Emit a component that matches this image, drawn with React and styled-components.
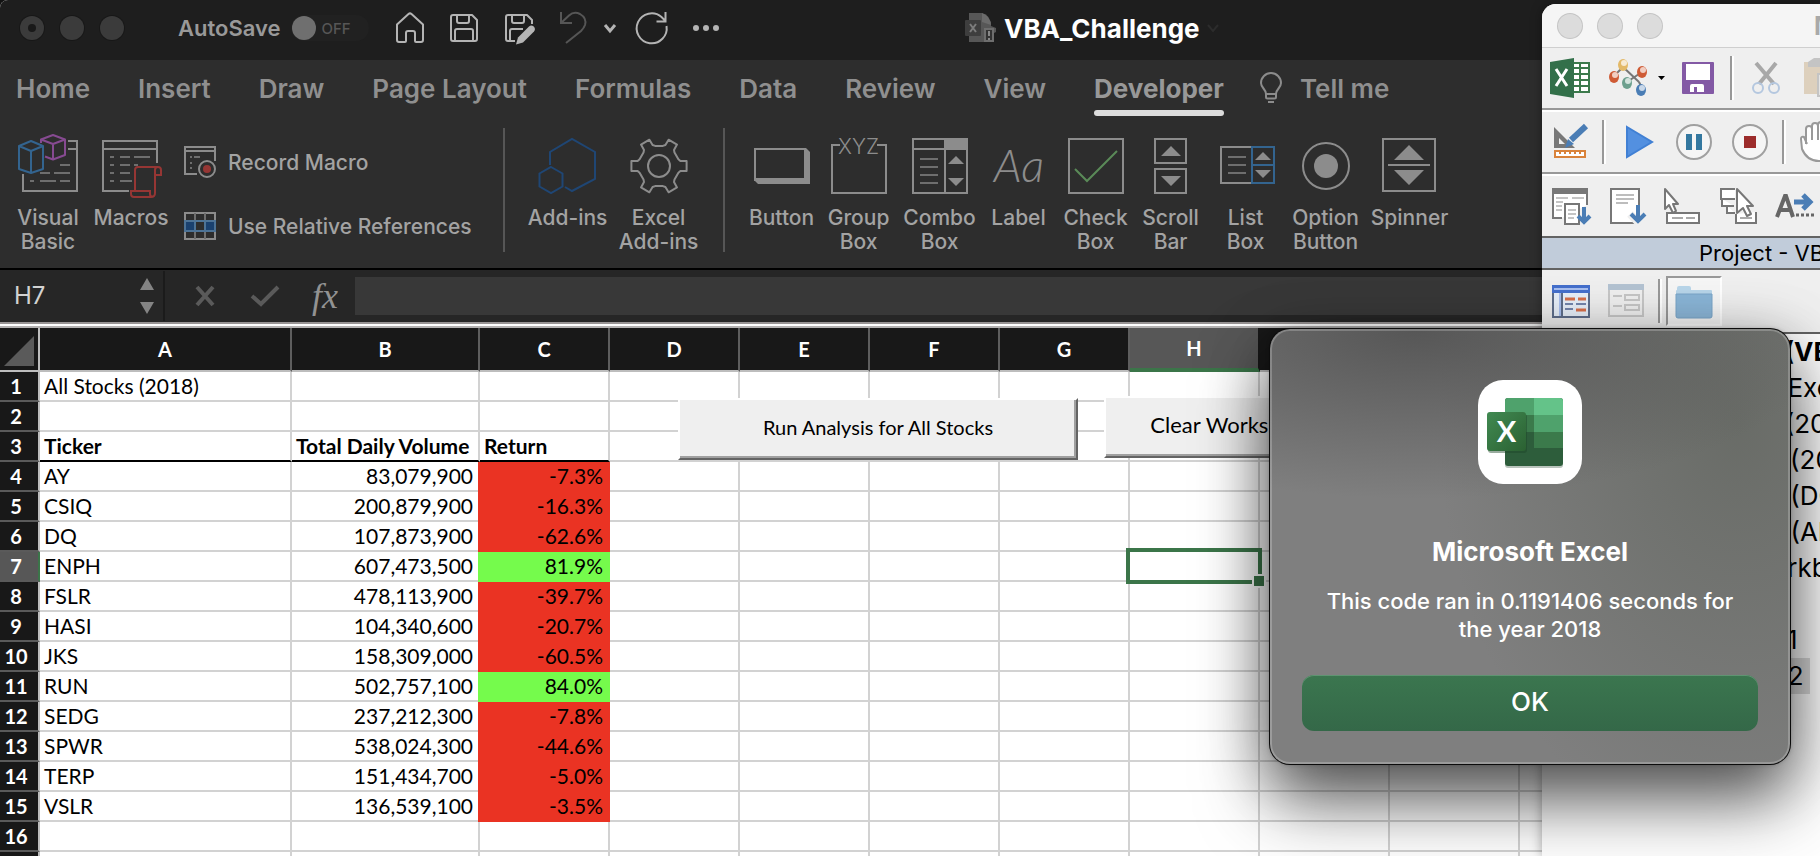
import React from "react";
import styled, { createGlobalStyle, css } from "styled-components";

const ui = `Inter, "Liberation Sans", sans-serif`;
const sheetFont = `Lato, "Liberation Sans", sans-serif`;

const GlobalStyle = createGlobalStyle`
  *, *::before, *::after { box-sizing: border-box; }
  html, body { margin: 0; height: 100%; overflow: hidden; background: #121212; }
  #root { height: 100%; }
  button, input { font: inherit; color: inherit; margin: 0; padding: 0; border: 0; background: none; border-radius: 0; outline: none; }
  svg { display: block; overflow: visible; flex: none; }
`;

/* ---------- desktop and Excel window ---------- */

const Desktop = styled.div`
  position: relative;
  height: 100vh;
  overflow: hidden;
  font-family: ${ui};
`;

const ExcelWindow = styled.main`
  display: flex;
  flex-direction: column;
  height: 100%;
  background: #fff;
  border-top-left-radius: 8px;
  overflow: hidden;
`;

const TitleBar = styled.header`
  display: flex;
  align-items: center;
  flex: none;
  height: 60px;
  padding: 0 0 4px 20px;
  background: #1e1e1e;
  color: #a0a0a0;
`;

const Lights = styled.div`
  display: flex;
  gap: 16px;
`;

const Light = styled.button`
  display: grid;
  place-items: center;
  width: 24px;
  height: 24px;
  border-radius: 50%;
  background: ${(p) => (p.$pale ? "#dcdcdc" : "#3b3b3b")};
  box-shadow: 0 0 0 1px ${(p) => (p.$pale ? "#c4c4c4" : "#181818")};
  &::after {
    content: "";
    width: 8px;
    height: 8px;
    border-radius: 50%;
    background: ${(p) => (p.$dirty ? "#191919" : "transparent")};
  }
`;

const Bar = styled.div`
  display: flex;
  align-items: center;
  flex: none;
  height: 56px;
`;

const AutoSave = styled.label`
  display: flex;
  align-items: center;
  gap: 10px;
  width: 205px;
  margin-left: 54px;
  font-size: 22px;
  font-weight: 600;
  color: #999;
`;

const Switch = styled.span`
  display: flex;
  align-items: center;
  gap: 6px;
  width: 78px;
  height: 26px;
  padding-left: 1px;
  border-radius: 13px;
  background: #212121;
  font-size: 15px;
  font-weight: 500;
  color: #565656;
  input { position: absolute; opacity: 0; width: 24px; height: 24px; }
  i { width: 24px; height: 24px; border-radius: 50%; background: #6f6f6f; flex: none; }
`;

const QuickButton = styled.button`
  display: grid;
  place-items: center;
  flex: none;
  width: ${(p) => p.$w || 54}px;
  height: 40px;
`;

const DocTitle = styled.div`
  display: flex;
  align-items: center;
  gap: 7px;
  margin-left: 236px;
  color: #fff;
  font-size: 26px;
  font-weight: 700;
  white-space: nowrap;
`;

const Tabs = styled.nav`
  display: flex;
  align-items: flex-start;
  flex: none;
  gap: 48px;
  height: 58px;
  padding: 12px 0 0 16px;
  background: #2d2d2d;
`;

const Tab = styled.button`
  flex: none;
  display: flex;
  align-items: center;
  gap: 18px;
  height: 44px;
  padding-bottom: 6px;
  font-size: 26px;
  font-weight: ${(p) => (p.$on ? 700 : 600)};
  color: ${(p) => (p.$on ? "#989898" : "#8f8f8f")};
  border-bottom: 6px solid transparent;
  white-space: nowrap;
  margin-right: ${(p) => (p.$on ? "-12px" : "0")};
  ${(p) => p.$on && css`
    position: relative;
    &::after {
      content: "";
      position: absolute;
      left: 0;
      right: 0;
      bottom: -6px;
      height: 6px;
      border-radius: 3px;
      background: #dcdcdc;
    }
  `}
`;

const Ribbon = styled.section`
  display: flex;
  flex: none;
  align-items: flex-start;
  height: 152px;
  padding: 10px 0 0 10px;
  background: #2d2d2d;
  border-bottom: 2px solid #000;
  color: #a3a3a3;
  font-size: 21px;
  font-weight: 500;
`;

const ToolGroup = styled.div`
  display: flex;
  padding: 6px 18px 0 ${(p) => (p.$first ? 0 : 18)}px;
`;

const Divider = styled.div`
  flex: none;
  width: 2px;
  height: 124px;
  background: #565656;
`;

const Tool = styled.button`
  display: flex;
  flex-direction: column;
  align-items: center;
  gap: 12px;
  flex: none;
  width: ${(p) => p.$w}px;
  line-height: 24px;
  white-space: pre;
  text-align: center;
`;

const SmallTools = styled.div`
  display: flex;
  flex-direction: column;
  gap: 32px;
  padding: 12px 13px 0 8px;
`;

const SmallTool = styled.button`
  display: flex;
  align-items: center;
  gap: 12px;
  height: 32px;
  white-space: nowrap;
`;

const FormulaBar = styled.section`
  display: flex;
  align-items: center;
  flex: none;
  height: 52px;
  background: #262626;
`;

const NameBox = styled.div`
  display: flex;
  align-items: center;
  justify-content: space-between;
  width: 165px;
  height: 50px;
  padding: 0 9px 0 14px;
  border-right: 2px solid #1b1b1b;
  input { width: 100px; height: 42px; padding-bottom: 2px; font-size: 24px; color: #d2d2d2; }
`;

const FormulaButton = styled.button`
  width: 60px;
  height: 40px;
  display: grid;
  place-items: center;
  color: #929292;
  font: italic 36px/36px "Liberation Serif", serif;
`;

const FormulaActions = styled.div`
  display: flex;
  padding-left: 10px;
  flex: none;
`;

const FormulaInput = styled.input`
  flex: 1;
  min-width: 0;
  height: 38px;
  padding: 0 12px;
  background: #383838;
  color: #ddd;
  font-size: 22px;
`;

const Splitter = styled.div`
  flex: none;
  height: 6px;
  background: #fff;
  border-top: 2px solid #989494;
  border-bottom: 2px solid #b4b2b2;
`;

/* ---------- worksheet ---------- */

const SheetArea = styled.section`
  position: relative;
  flex: 1;
  min-height: 0;
  overflow: hidden;
  font-family: ${sheetFont};
  color: #000;
`;

const Grid = styled.table`
  table-layout: fixed;
  width: 100%;
  border-collapse: separate;
  border-spacing: 0;
  font-size: 21px;
  line-height: 28px;
  th, td { padding: 0; height: 30px; white-space: nowrap; }
`;

const ColHead = styled.th`
  && { height: 44px; }
  background: ${(p) => (p.$on ? "#575757" : "#181818")};
  border-right: 2px solid ${(p) => (p.$on ? "#181818" : "#5e5e5e")};
  border-bottom: ${(p) => (p.$on ? "4px solid #3b7549" : "2px solid #bdbdbd")};
  color: #fff;
  font-size: 20px;
  font-weight: 700;
`;

const Corner = styled.th`
  && { height: 44px; padding: 4px 0 0 4px; }
  background: #181818;
  border-right: 2px solid #bdbdbd;
  border-bottom: 2px solid #bdbdbd;
`;

const RowHead = styled.th`
  && { padding-right: 6px; }
  background: ${(p) => (p.$on ? "#575757" : "#181818")};
  border-right: 2px solid ${(p) => (p.$on ? "#3b7549" : "#bdbdbd")};
  border-bottom: 2px solid #5a5a5a;
  color: #fff;
  font-size: 20px;
  font-weight: 700;
`;

const fills = { red: "#ea3323", green: "#75fb4c" };

const Cell = styled.td`
  && { padding: 0 5px 0 4px; }
  border-right: 2px solid #d2d2d2;
  border-bottom: 2px solid #d2d2d2;
  text-align: ${(p) => (p.$num ? "right" : "left")};
  font-weight: ${(p) => (p.$bold ? 700 : 400)};
  ${(p) => p.$active && css`position: relative;`}
  ${(p) => p.$bold && css`border-bottom-color: #000;`}
  ${(p) => p.$fill && css`
    background: ${fills[p.$fill]};
    border-color: ${fills[p.$fill]};
    box-shadow: -2px 0 0 ${fills[p.$fill]};
  `}
`;

const Selection = styled.div`
  position: absolute;
  inset: -4px;
  border: 4px solid #3b7549;
  &::after {
    content: "";
    position: absolute;
    right: -8px;
    bottom: -8px;
    width: 14px;
    height: 14px;
    background: #3b7549;
    border: 2px solid #fff;
  }
`;

const SheetButton = styled.button`
  position: absolute;
  left: ${(p) => p.$x}px;
  top: ${(p) => p.$y}px;
  width: ${(p) => p.$w}px;
  height: 62px;
  background: #efefef;
  border: 2px solid;
  border-color: #fff #646464 #646464 #fff;
  box-shadow: inset -2px -2px 0 #a0a0a0;
  font-size: ${(p) => p.$size}px;
  line-height: 28px;
  padding-bottom: 4px;
`;

/* ---------- Visual Basic window ---------- */

const VbaWindow = styled.aside`
  position: absolute;
  left: 1542px;
  right: 0;
  top: 4px;
  bottom: 0;
  display: flex;
  flex-direction: column;
  overflow: hidden;
  background: #fff;
  border-top-left-radius: 14px;
  color: #000;
`;

const VbaShadow = styled.div`
  position: absolute;
  left: 1542px;
  right: 0;
  top: 4px;
  bottom: 0;
  border-top-left-radius: 14px;
  box-shadow: 0 0 12px rgba(0, 0, 0, 0.35);
`;

const VbaTitle = styled.header`
  display: flex;
  align-items: center;
  flex: none;
  height: 44px;
  padding-left: 16px;
  background: #f5f5f5;
  border-bottom: 1px solid #cfcfcf;
  h2 { margin: 0 0 0 152px; font-size: 25px; font-weight: 700; color: #a9a9a9; white-space: nowrap; }
`;

const VbaToolbar = styled.div`
  display: flex;
  align-items: center;
  flex: none;
  height: ${(p) => (p.$last ? 62 : 64)}px;
  background: #efefef;
  border-bottom: ${(p) => (p.$dark ? "2px solid #636363" : "2px solid #fff")};
  box-shadow: ${(p) => (p.$dark ? "none" : "inset 0 -2px 0 #989898")};
  padding-bottom: ${(p) => (p.$dark ? 0 : 2)}px;
`;

const VbaButton = styled.button`
  display: flex;
  align-items: center;
  justify-content: center;
  flex: none;
  width: 56px;
  height: 50px;
  ${(p) => p.$pressed && css`
    background: #f6f6f6;
    border: 2px solid;
    border-color: #999 #fff #fff #999;
  `}
`;

const VbaDropButton = styled(VbaButton)`
  justify-content: flex-start;
  gap: 5px;
  width: 72px;
  padding-left: 10px;
`;

const VbaSeparator = styled.div`
  flex: none;
  width: 4px;
  height: 44px;
  margin: 0 4px;
  background: #fff;
  border-left: 2px solid #999;
`;

const ProjectTitle = styled.div`
  flex: none;
  height: 32px;
  padding-left: 157px;
  background: #c1ccda;
  border-bottom: 2px solid #636363;
  font-size: 22px;
  line-height: 30px;
  white-space: nowrap;
`;

const Tree = styled.ul`
  margin: 0;
  padding: 0;
  list-style: none;
  font-size: 26px;
  line-height: 36px;
  white-space: nowrap;
`;

const TreeItem = styled.li`
  height: 36px;
  padding-left: ${(p) => 90 + p.$level * 32}px;
  font-weight: ${(p) => (p.$level === 0 ? 700 : 400)};
  span {
    display: inline-block;
    padding-right: 6px;
    background: ${(p) => (p.$selected ? "#dadada" : "transparent")};
  }
`;

/* ---------- message box ---------- */

const Dialog = styled.section`
  position: absolute;
  left: 1270px;
  top: 329px;
  width: 520px;
  padding: 51px 32px 33px;
  display: flex;
  flex-direction: column;
  align-items: center;
  border-radius: 20px;
  color: #fff;
  text-align: center;
  background:
    radial-gradient(ellipse 420px 170px at 28% 0, rgba(76, 76, 76, 0.8), transparent),
    radial-gradient(ellipse 300px 420px at 90% 22%, rgba(104, 107, 102, 0.95), transparent),
    #7f7f7f;
  box-shadow:
    0 0 0 1px #0c0c0c,
    inset 0 0 0 2px rgba(255, 255, 255, 0.22),
    0 0 4px rgba(0, 0, 0, 0.3),
    0 10px 60px rgba(0, 0, 0, 0.25),
    0 36px 70px rgba(0, 0, 0, 0.62);
  h1 { margin: 50px 0 0; font-size: 26px; line-height: 36px; font-weight: 700; }
  p { margin: 17px 0 32px; width: 430px; font-size: 22px; line-height: 28px; font-weight: 500; }
`;

const OkButton = styled.button`
  width: 100%;
  height: 56px;
  padding-bottom: 3px;
  border-radius: 12px;
  background: linear-gradient(#3b764f, #346848);
  box-shadow: inset 0 1px 0 #5f9472;
  font-size: 26px;
  font-weight: 500;
`;

/* ---------- icons ---------- */

const L = "#8c8c8c";
const D = "#6e6e6e";

const Svg = ({ w = 60, h = 60, sw = 2, s = L, children }) => (
  <svg width={w} height={h} viewBox={`0 0 ${w} ${h}`} fill="none" stroke={s} strokeWidth={sw} aria-hidden="true">
    {children}
  </svg>
);

const quick = "#b4b4b4";

const HomeIcon = () => (
  <Svg w={30} h={32} s={quick}><path strokeLinejoin="round" d="M2 12.500 13.500 2q1.500-1.300 3 0L28 12.500V28q0 2-2 2h-5q-1 0-1-1v-8q0-2-2-2h-5q-2 0-2 2v8q0 1-1 1H4q-2 0-2-2Z" /></Svg>
);
const SaveIcon = () => (
  <Svg w={30} h={30} s={quick}><path strokeLinejoin="round" d="M4 2h19l5 5v19q0 2-2 2H4q-2 0-2-2V4q0-2 2-2ZM8 2v6q0 2 2 2h8q2 0 2-2V2M6 28V18q0-2 2-2h14q2 0 2 2v10" /></Svg>
);
const SaveEditIcon = () => (
  <Svg w={30} h={30} s={quick}>
    <path strokeLinejoin="round" d="M11 28H4q-2 0-2-2V4q0-2 2-2h19l5 5v4M8 2v6q0 2 2 2h8q2 0 2-2V2M6 28V18q0-2 2-2h11" />
    <path d="m25 13.500c3-3 8 1.500 5 5L19 29.500l-7 2 2-7Z" fill={quick} stroke="none" />
  </Svg>
);
const UndoIcon = () => (
  <Svg w={28} h={32} s="#565656"><path d="M2 0v11h11M2 11 10 3.500Q15-1 21 2q7 4 5 11-1 3-4 6L7 31" /></Svg>
);
const ChevronIcon = ({ color = quick, sw = 3 }) => (
  <Svg w={12} h={8} s={color} sw={sw}><path d="m1 1 5 6 5-6" /></Svg>
);
const RedoIcon = () => (
  <Svg w={32} h={32} s={quick}><path d="M30.500 14a15 15 0 1 1-5-9l4 4M29.500 0v9.500h-9" /></Svg>
);
const DotsIcon = () => (
  <Svg w={26} h={6} s="none"><g fill={quick}><circle cx="3" cy="3" r="3" /><circle cx="13" cy="3" r="3" /><circle cx="23" cy="3" r="3" /></g></Svg>
);
const DocIcon = () => (
  <Svg w={32} h={32} s="none">
    <path d="M4 1h13l9 9v4l5 2v4l-2 1v9H4Z" fill="#575757" />
    <path d="M17 1q8 2 9 12l-9-3Z" fill="#6b6b6b" />
    <rect x="0" y="8" width="16" height="16" rx="1" fill="#3e3e3e" />
    <path d="m5 12 6 8m0-8-6 8" stroke="#7c7c7c" strokeWidth="2" />
    <rect x="20" y="17" width="8" height="12" fill="#333" stroke="#6e6e6e" />
    <path d="M24 19v5m0 2v2" stroke="#888" strokeWidth="2" />
  </Svg>
);
const BulbIcon = () => (
  <Svg w={22} h={30}><path d="M6 21c0-5-5-6-5-11a10 10 0 0 1 20 0c0 5-5 6-5 11v3q0 1.500-1.500 1.500h-7Q6 25.500 6 24ZM6 21h10M8 29h6" /></Svg>
);

const VisualBasicIcon = () => (
  <Svg>
    <path d="M50 7h9v50H5V40M50 15h9" />
    <path stroke={D} d="M42 31h10M22 39h10M36 39h16M12 47h4M22 47h16M42 47h10" />
    <g strokeLinejoin="round">
      <path stroke="#33648f" d="M1 12 13 7l12 5v23l-12 4-12-4ZM1 12l12 5 12-5M13 17v22" />
      <path stroke="#864a91" d="M23 9V5.500L35 1l12 4.500V21l-12 4.500-8-3M23 5.500 35 10l12-4.500M35 10v15" />
    </g>
  </Svg>
);
const MacrosIcon = () => (
  <Svg>
    <path d="M28 57H2V7h54v22M2 15h54" />
    <path stroke={D} d="M9 23h4M19 23h10M33 23h16M9 31h4M19 31h10M33 31h4M9 39h4M19 39h10M9 47h4M19 47h12" />
    <path stroke="#963634" d="M34 57V36q0-3 3-3h20q3 0 3 3v5h-6v-5q0-3 3-3M54 41v18q0 4-4 4H33q-3 0-3-3v-3h19v3q0 3 3 3" />
  </Svg>
);
const RecordIcon = () => (
  <Svg w={32} h={32}>
    <path d="M13 28H1V1h30v14M1 5h30" />
    <path stroke={D} d="M6 11h2M10 11h6M6 17h2M6 22h2" />
    <circle cx="23" cy="23" r="8" />
    <circle cx="23" cy="23" r="4" fill="#963634" stroke="none" />
  </Svg>
);
const RelativeIcon = () => (
  <Svg w={32} h={28}>
    <path d="M1 1h30v26H1Z" />
    <path stroke={D} d="M11 1v26M21 1v26" />
    <path fill="#1a416f" stroke="#4d7396" d="M1 9h10v10H1ZM21 9h10v10H21ZM11 9h10M11 19h10" />
  </Svg>
);
const AddinsIcon = () => (
  <Svg s="#1f4674">
    <path d="M12 31V18L34 5l23 13v27L34 57l-7-4" />
    <path d="M13 33 24.500 39.500v13L13 59 1.500 52.500v-13Z" />
  </Svg>
);
const teeth = Array.from({ length: 6 }, (_, i) => {
  const pt = (r, deg) => {
    const a = ((i * 60 + deg) * Math.PI) / 180;
    return `${(30 + r * Math.cos(a)).toFixed(1)} ${(32 + r * Math.sin(a)).toFixed(1)}`;
  };
  return [pt(20.5, -19), pt(22, -13), pt(28, -10), pt(28, 10), pt(22, 13), pt(20.5, 19)].join("L");
}).join("L");
const GearIcon = () => (
  <Svg><path strokeLinejoin="round" d={`M${teeth}Z`} /><circle cx="30" cy="32" r="11" /></Svg>
);
const ButtonIcon = () => (
  <Svg><path d="M3 15h50v31H3Z" /><path fill={L} stroke="none" d="M52 14h2l4 4v32H6l-4-4v-2h50Z" /></Svg>
);
const GroupBoxIcon = () => (
  <Svg>
    <path d="M11 11H3v48h54V11h-9" />
    <text x="29.500" y="20" textAnchor="middle" fill={L} stroke="none" fontFamily={ui} fontSize="21" fontWeight="300">XYZ</text>
  </Svg>
);
const ComboBoxIcon = () => (
  <Svg>
    <path d="M3 5h54v54H3ZM3 15h54M35 5v54" />
    <path stroke={D} d="M10 25h18M10 33h18M10 41h18M10 49h18" />
    <path fill={L} stroke="none" d="M34 4h24v12H34ZM38 30l8-8 8 8ZM38 44l8 8 8-8Z" />
  </Svg>
);
const LabelIcon = () => (
  <Svg><text x="30" y="48" textAnchor="middle" fill={L} stroke="none" fontFamily={sheetFont} fontStyle="italic" fontSize="46" fontWeight="300">Aa</text></Svg>
);
const CheckBoxIcon = () => (
  <Svg><path d="M3 5h54v54H3Z" /><path stroke="#5a8a58" d="m9 35 12 12 30-30" /></Svg>
);
const ScrollBarIcon = () => (
  <Svg>
    <path d="M14 5h31v24H14ZM14 35h31v24H14Z" />
    <path fill={L} stroke="none" d="m20 22 10-10 10 10ZM20 42l10 10 10-10Z" />
  </Svg>
);
const ListBoxIcon = () => (
  <Svg>
    <path d="M35 13H5v36h30" />
    <path stroke={D} d="M12 23h18M12 31h18M12 39h18" />
    <path stroke="#33648f" d="M36 13h22v36H36ZM36 31h22" />
    <path fill={L} stroke="none" d="m39 26 8-8 8 8ZM39 36l8 8 8-8Z" />
  </Svg>
);
const OptionIcon = () => (
  <Svg><circle cx="30" cy="32" r="23" /><circle cx="30" cy="32" r="12" fill={L} stroke="none" /></Svg>
);
const SpinnerIcon = () => (
  <Svg>
    <path d="M3 5h52v52H3ZM8 31h42" />
    <path fill={L} stroke="none" d="m14 26 15-15 15 15ZM14 36l15 15 15-15Z" />
  </Svg>
);

const VIcon = ({ children }) => <Svg w={40} h={40} s="#777">{children}</Svg>;

const XlDocIcon = () => (
  <VIcon>
    <path fill="#fff" stroke="#3c7a4c" d="M22 5h17v29H22Z" />
    <path stroke="#3c7a4c" strokeWidth="2" d="M22 10h16M22 16h16M22 22h16M22 28h16M30 5v29" />
    <path fill="#33704a" stroke="none" d="M0 4 24 0v40L0 36Z" />
    <path stroke="#fff" strokeWidth="3" d="m6 11 11 17M17 11 6 28" />
  </VIcon>
);
const MoleculeIcon = () => (
  <VIcon>
    <path d="M4 20 15 9l16 15M16 26l18-12M31 24l4 8" strokeWidth="2" />
    {[[15, 7, "#e3b968"], [6, 19, "#cf5b35"], [34, 14, "#cf5b35"], [19, 25, "#6da08e"], [33, 32, "#4a7db5"]].map(([x, y, c]) => (
      <g key={x + c} stroke="none">
        <ellipse cx={x} cy={y} rx="5" ry="6" fill={c} />
        <ellipse cx={x + 1} cy={y - 2} rx="3" ry="3" fill="#fff" opacity=".7" />
      </g>
    ))}
  </VIcon>
);
const CaretIcon = () => <Svg w={16} h={6} s="none"><path fill="#000" d="M5 1h7L8.500 5Z" /></Svg>;
const DiskIcon = () => (
  <VIcon>
    <rect x="4" y="4" width="32" height="32" rx="1" fill="#8359a5" stroke="none" />
    <path fill="#fff" stroke="none" d="M8 6h24v16H8ZM12 28q0-2 2-2h10q2 0 2 2v6h-7v-5h-3v5h-4Z" />
  </VIcon>
);
const CutIcon = () => (
  <VIcon>
    <path stroke="#a8a8a8" strokeWidth="4" d="M10 5 28 26M30 5 13 26" />
    <g stroke="#b4c7df"><circle cx="12" cy="30" r="5" /><circle cx="28" cy="30" r="5" /></g>
  </VIcon>
);
const PasteIcon = () => (
  <VIcon>
    <path fill="#ddd0bd" stroke="none" d="M2 4h36v32H2Z" />
    <path fill="#c4c4c4" stroke="none" d="M6 9V4l6-4h16l6 4v5Z" />
    <path fill="#e4e4e4" stroke="#c4c4c4" d="M16 16h22v22H16Z" />
  </VIcon>
);
const DesignIcon = () => (
  <VIcon>
    <path fill="#777" stroke="none" fillRule="evenodd" d="M4 5v21h21ZM9 16v6h6Z" />
    <path stroke="#efefef" strokeWidth="9" d="M20 19 36 5" />
    <path stroke="#4a7db5" strokeWidth="6" d="M21 18 36 4" />
    <path fill="#4a7db5" stroke="none" d="m15 26 3-9 6 5Z" />
    <path stroke="#d9833b" d="M5 29h30v6H5ZM10 29v3M15 29v3M20 29v3M25 29v3M30 29v3" fill="#fff" />
  </VIcon>
);
const PlayIcon = () => (
  <VIcon><path fill="#5390e0" stroke="#4180d4" d="m9 5 25 15L9 35Z" /></VIcon>
);
const PauseIcon = () => (
  <VIcon><circle cx="20" cy="20" r="17" fill="#f5f5f5" stroke="#a0a0a0" /><path fill="#3478a0" stroke="none" d="M12 12h6v16h-6ZM22 12h6v16h-6Z" /></VIcon>
);
const StopIcon = () => (
  <VIcon><circle cx="20" cy="20" r="17" fill="#f5f5f5" stroke="#a0a0a0" /><path fill="#9c2c2b" stroke="none" d="M14 14h12v12H14Z" /></VIcon>
);
const HandIcon = () => (
  <VIcon><path fill="#fff" stroke="#999" strokeLinejoin="round" d="M8 22V7q0-3 3-3t3 3V4q0-3 3-3t3 3V3q0-3 3-3t3 3v4q0-2 3-2t3 3v18q0 13-11 13-12 0-17-12L3 17q0-3 3-2l3 7M14 7v11M20 4v14M26 6v12" /></VIcon>
);
const ListPropsIcon = () => (
  <VIcon>
    <path fill="#fff" d="M12 32H3V3h34v16" /><path fill="#777" stroke="none" d="M2 2h36v6H2Z" />
    <path stroke="#c4c4c4" d="M6 12h12M22 12h12M6 16h7M6 20h6M6 24h6" />
    <path fill="#fff" d="M15 18h14v20H15Z" /><path stroke="#c4c4c4" d="M18 24h8M18 28h8M18 32h6" />
    <path stroke="#4a7db5" strokeWidth="4" d="M34 21v14M28 30l6 6 6-6" />
  </VIcon>
);
const ListConstIcon = () => (
  <VIcon>
    <path fill="#fff" d="M5 3h28v34H5Z" /><path stroke="#bdbdbd" d="M10 9h18M10 13h18M10 17h12" />
    <path stroke="#efefef" strokeWidth="8" d="m24 28 8 8 8-8" />
    <path stroke="#4a7db5" strokeWidth="4" d="M32 19v16M25 28l7 7 7-7" />
  </VIcon>
);
const QuickInfoIcon = () => (
  <VIcon>
    <path fill="#fff" d="M5 27h32v10H5Z" /><path stroke="#aaa" d="M10 32h11M24 32h9" />
    <path fill="#fff" strokeLinejoin="round" d="M3 3v20l4-4 4 8 3-2-3-7h5Z" />
  </VIcon>
);
const ParamInfoIcon = () => (
  <VIcon>
    <path fill="#fff" d="M17 3H3v10h14M4 13v7h12M9 20v7h8" />
    <path fill="#fff" d="M18 28v9h20V26" /><path stroke="#aaa" d="M22 32h12" />
    <path fill="#fff" strokeLinejoin="round" d="M19 3v24l6-5 4 8 4-2-4-8h6Z" />
  </VIcon>
);
const CompleteWordIcon = () => (
  <VIcon>
    <path strokeWidth="4" d="m3 31 8-21h1l7 21M6 24h11" stroke="#666" />
    <path stroke="#4a7db5" strokeWidth="5" d="M20 16h16M29 9l7 7-7 7" />
    <path stroke="#666" strokeWidth="3" strokeDasharray="3 2" d="M22 29h18" />
  </VIcon>
);
const ViewCodeIcon = () => (
  <VIcon>
    <path fill="#e8f0fa" stroke="#5f6f8c" d="M3 5h36v31H3Z" /><path fill="#4570cd" stroke="none" d="M2 4h38v8H2Z" />
    <path stroke="#a9c0f0" d="M4 8h34M10 12v23" /><path stroke="#5f6f8c" d="M12 12v24" />
    <path stroke="#d8704a" strokeWidth="3" d="M15 18h10M28 18h8M26 29h10" /><path stroke="#7486ad" d="M15 23h8M26 23h10M15 28h8" />
  </VIcon>
);
const ViewObjectIcon = () => (
  <VIcon>
    <path fill="#f0f0f0" stroke="#c8c8c8" d="M3 4h34v31H3Z" /><path fill="#b4c3d2" stroke="none" d="M2 3h36v6H2Z" />
    <path stroke="#c8c8c8" d="M7 15h9M7 25h9M19 14h14v5H19ZM19 24h14v5H19Z" />
  </VIcon>
);
const FolderIcon = () => (
  <VIcon>
    <path fill="#b9d6ea" stroke="none" d="M2 10q0-1 1-1V7q0-2 2-2h10q2 0 2 2v2h20q1 0 1 1v8H2Z" />
    <path fill="#8bb6d8" stroke="#7aa6c9" strokeWidth="1" d="M2 13h36v22q0 2-2 2H4q-2 0-2-2Z" />
  </VIcon>
);

const ExcelAppIcon = () => (
  <svg width="104" height="104" viewBox="0 0 104 104" aria-hidden="true">
    <defs>
      <clipPath id="book"><rect x="27" y="18" width="58" height="68" rx="3" /></clipPath>
      <linearGradient id="tile" x1="0" y1="0" x2="1" y2="1"><stop offset="0" stopColor="#418a52" /><stop offset="1" stopColor="#2b6132" /></linearGradient>
    </defs>
    <rect width="104" height="104" rx="25" fill="#fff" />
    <rect x="27" y="21" width="58" height="67" rx="3" fill="#b9c4bc" />
    <g clipPath="url(#book)">
      <path fill="#2d5d3b" d="M27 18h58v68H27Z" /><path fill="#4fa26c" d="M27 18h30v17H27Z" />
      <path fill="#64c389" d="M56 18h29v17H56Z" /><path fill="#3b7a4b" d="M27 35h29v17H27Z" />
      <path fill="#4fa26c" d="M56 35h29v17H56Z" /><path fill="#3b7a4b" d="M56 52h29v16H56Z" />
    </g>
    <rect x="10" y="34" width="39" height="39" rx="3" fill="#1d4427" opacity=".45" />
    <rect x="9" y="32" width="39" height="39" rx="3" fill="url(#tile)" />
    <text x="28.500" y="62" textAnchor="middle" fill="#fff" fontFamily={sheetFont} fontWeight="700" fontSize="29">X</text>
  </svg>
);

/* ---------- data ---------- */

const tabs = ["Home", "Insert", "Draw", "Page Layout", "Formulas", "Data", "Review", "View", "Developer"];

const addins = [["Add-ins", 90, AddinsIcon], ["Excel\nAdd-ins", 92, GearIcon]];

const controls = [
  ["Button", 78, ButtonIcon],
  ["Group\nBox", 76, GroupBoxIcon],
  ["Combo\nBox", 86, ComboBoxIcon],
  ["Label", 72, LabelIcon],
  ["Check\nBox", 82, CheckBoxIcon],
  ["Scroll\nBar", 68, ScrollBarIcon],
  ["List\nBox", 82, ListBoxIcon],
  ["Option\nButton", 78, OptionIcon],
  ["Spinner", 90, SpinnerIcon],
];

const columns = ["A", "B", "C", "D", "E", "F", "G", "H", "I", "J", "K", "L"];
const widths = [252, 188, 130, 130, 130, 130, 130, 130, 130, 130, 130];

const stocks = [
  ["AY", "83,079,900", "-7.3%"],
  ["CSIQ", "200,879,900", "-16.3%"],
  ["DQ", "107,873,900", "-62.6%"],
  ["ENPH", "607,473,500", "81.9%"],
  ["FSLR", "478,113,900", "-39.7%"],
  ["HASI", "104,340,600", "-20.7%"],
  ["JKS", "158,309,000", "-60.5%"],
  ["RUN", "502,757,100", "84.0%"],
  ["SEDG", "237,212,300", "-7.8%"],
  ["SPWR", "538,024,300", "-44.6%"],
  ["TERP", "151,434,700", "-5.0%"],
  ["VSLR", "136,539,100", "-3.5%"],
];

const rows = [["All Stocks (2018)"], [], ["Ticker", "Total Daily Volume", "Return"], ...stocks, [], []];

const tree = [
  ["VBAProject (VBA_Challenge)", 0],
  ["Microsoft Excel Objects", 1],
  ["Sheet1 (2018)", 2],
  ["Sheet2 (2017)", 2],
  ["Sheet3 (DQ Analysis)", 2],
  ["Sheet4 (All Stocks)", 2],
  ["ThisWorkbook", 2],
  ["Modules", 1],
  ["Module1", 2],
  ["Module2", 2],
];

const ToolList = ({ items }) =>
  items.map(([label, w, Icon]) => (
    <Tool key={label} $w={w}><Icon />{label}</Tool>
  ));

const VTool = ({ label, icon: Icon, pressed }) => (
  <VbaButton aria-label={label} $pressed={pressed}><Icon /></VbaButton>
);

function Worksheet() {
  return (
    <SheetArea>
      <Grid>
        <colgroup>
          <col style={{ width: 40 }} />
          {widths.map((w, i) => <col key={i} style={{ width: w }} />)}
          <col />
        </colgroup>
        <thead>
          <tr>
            <Corner aria-label="Select all"><Svg w={30} h={30} s="none"><path fill="#5a5a5a" d="M30 0v30H0Z" /></Svg></Corner>
            {columns.map((c) => <ColHead key={c} scope="col" $on={c === "H"}>{c}</ColHead>)}
          </tr>
        </thead>
        <tbody>
          {rows.map((row, r) => (
            <tr key={r}>
              <RowHead scope="row" $on={r === 6}>{r + 1}</RowHead>
              {columns.map((c, i) => {
                const stock = r > 2 && r < 15;
                const fill = stock && i === 2 ? (row[2].startsWith("-") ? "red" : "green") : undefined;
                const active = r === 6 && c === "H";
                return (
                  <Cell key={c} $bold={r === 2 && i < 3} $num={stock && i > 0} $fill={fill} $active={active}>
                    {row[i]}
                    {active && <Selection />}
                  </Cell>
                );
              })}
            </tr>
          ))}
        </tbody>
      </Grid>
      <SheetButton $x={678} $y={70} $w={400} $size={20}>Run Analysis for All Stocks</SheetButton>
      <SheetButton $x={1104} $y={68} $w={254} $size={22}>Clear Worksheet</SheetButton>
    </SheetArea>
  );
}

function VisualBasic() {
  return (
    <VbaWindow>
      <VbaTitle>
        <Lights>
          <Light $pale aria-label="Close" /><Light $pale aria-label="Minimize" /><Light $pale aria-label="Zoom" />
        </Lights>
        <h2>Microsoft Visual Basic</h2>
      </VbaTitle>
      <VbaToolbar>
        <VTool label="View Microsoft Excel" icon={XlDocIcon} />
        <VbaDropButton aria-label="Insert"><MoleculeIcon /><CaretIcon /></VbaDropButton>
        <VTool label="Save" icon={DiskIcon} />
        <VbaSeparator />
        <VTool label="Cut" icon={CutIcon} />
        <VTool label="Paste" icon={PasteIcon} />
      </VbaToolbar>
      <VbaToolbar>
        <VTool label="Design Mode" icon={DesignIcon} />
        <VbaSeparator />
        <VTool label="Run" icon={PlayIcon} />
        <VTool label="Break" icon={PauseIcon} />
        <VTool label="Reset" icon={StopIcon} />
        <VbaSeparator />
        <VTool label="Toggle Breakpoint" icon={HandIcon} />
      </VbaToolbar>
      <VbaToolbar $dark $last>
        <VTool label="List Properties" icon={ListPropsIcon} />
        <VTool label="List Constants" icon={ListConstIcon} />
        <VTool label="Quick Info" icon={QuickInfoIcon} />
        <VTool label="Parameter Info" icon={ParamInfoIcon} />
        <VTool label="Complete Word" icon={CompleteWordIcon} />
      </VbaToolbar>
      <ProjectTitle>Project - VBAProject</ProjectTitle>
      <VbaToolbar $dark>
        <VTool label="View Code" icon={ViewCodeIcon} />
        <VTool label="View Object" icon={ViewObjectIcon} />
        <VbaSeparator />
        <VTool label="Toggle Folders" icon={FolderIcon} pressed />
      </VbaToolbar>
      <Tree>
        {tree.map(([label, level]) => (
          <TreeItem key={label} $level={level} $selected={label === "Module2"}><span>{label}</span></TreeItem>
        ))}
      </Tree>
    </VbaWindow>
  );
}

export default function App() {
  return (
    <Desktop>
      <GlobalStyle />
      <ExcelWindow>
        <TitleBar>
          <Bar>
            <Lights>
              <Light $dirty aria-label="Close" /><Light aria-label="Minimize" /><Light aria-label="Zoom" />
            </Lights>
            <AutoSave>
              AutoSave
              <Switch><input type="checkbox" /><i />OFF</Switch>
            </AutoSave>
            <QuickButton $w={54} aria-label="Home"><HomeIcon /></QuickButton>
            <QuickButton $w={54} aria-label="Save"><SaveIcon /></QuickButton>
            <QuickButton $w={56} aria-label="Save As"><SaveEditIcon /></QuickButton>
            <QuickButton $w={52} aria-label="Undo"><UndoIcon /></QuickButton>
            <QuickButton $w={22} aria-label="Undo history"><ChevronIcon /></QuickButton>
            <QuickButton $w={62} aria-label="Redo"><RedoIcon /></QuickButton>
            <QuickButton $w={46} aria-label="More"><DotsIcon /></QuickButton>
            <DocTitle><DocIcon />VBA_Challenge<ChevronIcon color="#2c2c2c" sw={2} /></DocTitle>
          </Bar>
        </TitleBar>
        <Tabs>
          {tabs.map((t) => <Tab key={t} $on={t === "Developer"}>{t}</Tab>)}
          <Tab><BulbIcon />Tell me</Tab>
        </Tabs>
        <Ribbon>
          <ToolGroup $first>
            <Tool $w={76}><VisualBasicIcon />{"Visual\nBasic"}</Tool>
            <Tool $w={90}><MacrosIcon />Macros</Tool>
            <SmallTools>
              <SmallTool><RecordIcon />Record Macro</SmallTool>
              <SmallTool><RelativeIcon />Use Relative References</SmallTool>
            </SmallTools>
          </ToolGroup>
          <Divider />
          <ToolGroup><ToolList items={addins} /></ToolGroup>
          <Divider />
          <ToolGroup><ToolList items={controls} /></ToolGroup>
        </Ribbon>
        <FormulaBar>
          <NameBox>
            <input aria-label="Name box" defaultValue="H7" />
            <Svg w={14} h={36} s="none"><path fill="#848484" d="m0 12 7-12 7 12ZM0 24h14L7 36Z" /></Svg>
          </NameBox>
          <FormulaActions>
            <FormulaButton aria-label="Cancel"><Svg w={20} h={20} s="#5a5a5a" sw={4}><path d="m2 1 16 18M18 1 2 19" /></Svg></FormulaButton>
            <FormulaButton aria-label="Enter"><Svg w={28} h={20} s="#5a5a5a" sw={4}><path d="m1 10 9 8L27 1" /></Svg></FormulaButton>
            <FormulaButton aria-label="Insert function">fx</FormulaButton>
          </FormulaActions>
          <FormulaInput aria-label="Formula" />
        </FormulaBar>
        <Splitter />
        <Worksheet />
      </ExcelWindow>
      <VbaShadow />
      <VisualBasic />
      <Dialog role="alertdialog" aria-labelledby="msg-title">
        <ExcelAppIcon />
        <h1 id="msg-title">Microsoft Excel</h1>
        <p>This code ran in 0.1191406 seconds for the year 2018</p>
        <OkButton>OK</OkButton>
      </Dialog>
    </Desktop>
  );
}
